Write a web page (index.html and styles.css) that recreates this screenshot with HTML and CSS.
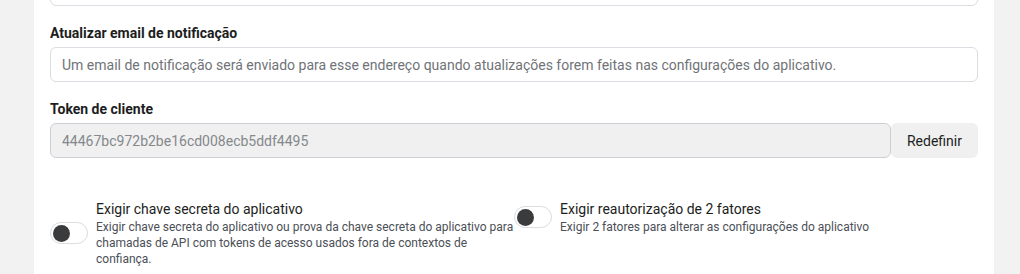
FILE: index.html
```html
<!DOCTYPE html>
<html lang="pt-BR">
<head>
    <meta charset="UTF-8">
    <meta name="viewport" content="width=device-width, initial-scale=1.0">
    <title>Configurações do aplicativo</title>
    <link rel="stylesheet" href="styles.css">
</head>
<body>
    <div class="card">
        <div class="field top-field">
            <input type="text" class="text-input" value="">
        </div>

        <div class="field">
            <label class="label" for="notifyEmail">Atualizar email de notificação</label>
            <input type="text" id="notifyEmail" class="text-input" placeholder="Um email de notificação será enviado para esse endereço quando atualizações forem feitas nas configurações do aplicativo.">
        </div>

        <div class="field">
            <label class="label" for="clientToken">Token de cliente</label>
            <div class="token-row">
                <input type="text" id="clientToken" class="text-input token-input" value="44467bc972b2be16cd008ecb5ddf4495" readonly>
                <button class="button">Redefinir</button>
            </div>
        </div>

        <div class="toggles">
            <div class="toggle-item">
                <span class="switch"><span class="knob"></span></span>
                <div class="toggle-text">
                    <div class="toggle-title">Exigir chave secreta do aplicativo</div>
                    <div class="toggle-desc">Exigir chave secreta do aplicativo ou prova da chave secreta do aplicativo para chamadas de API com tokens de acesso usados fora de contextos de confiança.</div>
                </div>
            </div>
            <div class="toggle-item">
                <span class="switch"><span class="knob"></span></span>
                <div class="toggle-text">
                    <div class="toggle-title">Exigir reautorização de 2 fatores</div>
                    <div class="toggle-desc">Exigir 2 fatores para alterar as configurações do aplicativo</div>
                </div>
            </div>
        </div>
    </div>
</body>
</html>
```

FILE: styles.css
```css
* {
    margin: 0;
    padding: 0;
    box-sizing: border-box;
    font-family: 'Roboto', 'Liberation Sans', sans-serif;
}

body {
    background-color: #f2f2f2;
    padding: 0 26px 0 34px;
    height: 274px;
    overflow: hidden;
}

.card {
    background: white;
    width: 960px;
    margin-top: -29px;
    padding: 0 16px 20px;
    min-height: 310px;
}

.field {
    margin-bottom: 18px;
}

.label {
    display: block;
    font-size: 14px;
    font-weight: bold;
    color: #1c1e21;
    line-height: 18px;
    margin-bottom: 5px;
}

.text-input {
    display: block;
    width: 100%;
    height: 35px;
    padding: 0 11px;
    border: 1px solid #dadde1;
    border-radius: 6px;
    font-size: 14px;
    color: #1c1e21;
    background: white;
}

.text-input::placeholder {
    color: #707378;
}

.text-input:focus {
    outline: none;
    border-color: #1877f2;
}

.token-row {
    display: flex;
}

.token-input {
    flex: 1;
    background: #f0f0f0;
    color: #85888c;
    border-color: #ccd0d5;
}

.button {
    width: 87px;
    height: 35px;
    border: none;
    border-radius: 6px;
    background-color: #f0f0f0;
    font-size: 14px;
    color: #1c1e21;
    cursor: pointer;
}

.button:hover {
    background-color: #e4e6eb;
}

.toggles {
    display: grid;
    grid-template-columns: 1fr 1fr;
    align-items: start;
    margin-top: 41px;
}

.toggle-item {
    display: flex;
    align-items: center;
    gap: 8px;
}

.switch {
    flex: none;
    width: 38px;
    height: 22px;
    border: 1px solid #dadde1;
    border-radius: 11px;
    background: white;
    padding: 1px 2px;
    display: flex;
    align-items: center;
}

.knob {
    width: 17px;
    height: 17px;
    border-radius: 50%;
    background: #3a3b3c;
}

.toggle-title {
    font-size: 14px;
    color: #1c1e21;
    line-height: 20px;
}

.toggle-desc {
    font-size: 12px;
    color: #4b4f56;
    line-height: 16px;
}
```
